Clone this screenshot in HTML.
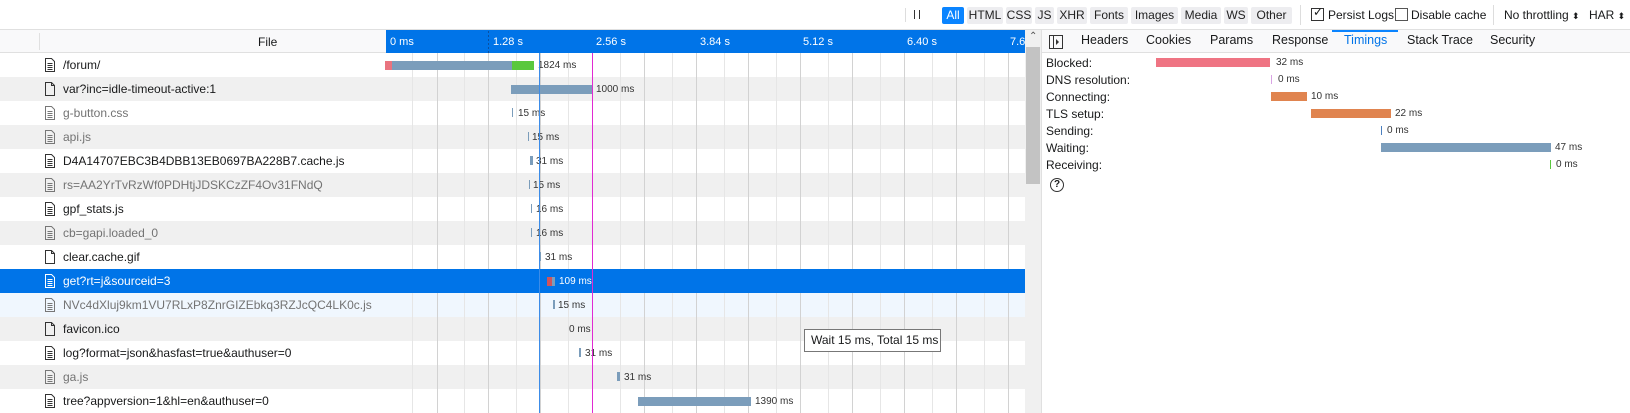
<!DOCTYPE html>
<html><head><meta charset="utf-8"><style>
*{margin:0;padding:0;box-sizing:border-box}
body{width:1630px;height:413px;overflow:hidden;background:#fff;font-family:"Liberation Sans",sans-serif;font-size:12px;color:#18191a;position:relative}
.a{position:absolute}
.tb{top:0;left:0;width:1630px;height:30px;border-bottom:1px solid #e0e0e0;background:#fff}
.btn{position:absolute;top:7px;height:17px;line-height:17px;background:#ededf0;border-radius:2px;font-size:12px;text-align:center;color:#222}
.row{position:absolute;left:0;width:1025px;height:24px}
.fn{position:absolute;left:63px;top:5px;font-size:12px;white-space:nowrap}
.bar{position:absolute;height:9px;background:#7b9dbb}
.lbl{position:absolute;font-size:10px;color:#333;white-space:nowrap}
.vl{position:absolute;top:53px;height:360px;width:1px}
.tab{position:absolute;top:33px;font-size:12.5px;color:#18191a}
.tl{position:absolute;left:1046px;font-size:12px}
</style></head><body>
<div class="a tb"></div>
<div class="a" style="left:905px;top:8px;width:1px;height:14px;background:#ddd"></div>
<div class="a" style="left:914px;top:10px;width:1px;height:9px;background:#333"></div>
<div class="a" style="left:919px;top:10px;width:1px;height:9px;background:#333"></div>
<div class="btn" style="left:942px;width:22px;background:#0a84ff;color:#fff">All</div>
<div class="btn" style="left:967px;width:36px">HTML</div>
<div class="btn" style="left:1006px;width:26px">CSS</div>
<div class="btn" style="left:1035px;width:19px">JS</div>
<div class="btn" style="left:1057px;width:30px">XHR</div>
<div class="btn" style="left:1090px;width:38px">Fonts</div>
<div class="btn" style="left:1131px;width:47px">Images</div>
<div class="btn" style="left:1181px;width:40px">Media</div>
<div class="btn" style="left:1224px;width:24px">WS</div>
<div class="btn" style="left:1251px;width:41px">Other</div>
<div class="a" style="left:1300px;top:5px;width:1px;height:20px;background:#ddd"></div>
<div class="a" style="left:1311px;top:8px;width:13px;height:13px;border:1px solid #333;background:#fff"></div>
<div class="a" style="left:1313px;top:5px;font-size:12px">✓</div>
<div class="a" style="left:1328px;top:8px">Persist Logs</div>
<div class="a" style="left:1395px;top:8px;width:13px;height:13px;border:1px solid #555;background:#fff"></div>
<div class="a" style="left:1411px;top:8px">Disable cache</div>
<div class="a" style="left:1493px;top:5px;width:1px;height:20px;background:#ddd"></div>
<div class="a" style="left:1504px;top:8px">No throttling <span style="font-size:9px">⬍</span></div>
<div class="a" style="left:1589px;top:8px">HAR <span style="font-size:9px">⬍</span></div>

<div class="a" style="left:0;top:30px;width:386px;height:23px;background:#f9f9fa;border-bottom:1px solid #e0e0e0"></div>
<div class="a" style="left:39px;top:33px;width:1px;height:17px;background:#e0e0e0"></div>
<div class="a" style="left:258px;top:35px">File</div>
<div class="a" style="left:386px;top:30px;width:639px;height:23px;background:#0074e8"></div>
<div class="a" style="left:390px;top:36px;color:#fff;font-size:11px;width:635px;height:14px;overflow:hidden">
<span class="a" style="left:0">0 ms</span><span class="a" style="left:103px">1.28 s</span><span class="a" style="left:206px">2.56 s</span><span class="a" style="left:310px">3.84 s</span><span class="a" style="left:413px">5.12 s</span><span class="a" style="left:517px">6.40 s</span><span class="a" style="left:620px">7.6</span></div>
<svg class="a" style="left:488px;top:31px" width="1" height="22"><line x1=".5" y1="0" x2=".5" y2="22" stroke="#0a4fa0" stroke-dasharray="2 2"/></svg>

<div class="row" style="top:53px;background:#fff"></div>
<div class="row" style="top:77px;background:#f0f0f0"></div>
<div class="row" style="top:101px;background:#fff"></div>
<div class="row" style="top:125px;background:#f0f0f0"></div>
<div class="row" style="top:149px;background:#fff"></div>
<div class="row" style="top:173px;background:#f0f0f0"></div>
<div class="row" style="top:197px;background:#fff"></div>
<div class="row" style="top:221px;background:#f0f0f0"></div>
<div class="row" style="top:245px;background:#fff"></div>
<div class="row" style="top:293px;background:#f0f7fe"></div>
<div class="row" style="top:317px;background:#f0f0f0"></div>
<div class="row" style="top:341px;background:#fff"></div>
<div class="row" style="top:365px;background:#f0f0f0"></div>
<div class="row" style="top:389px;background:#fff"></div>

<svg class="a" style="left:386px;top:53px" width="639" height="360">
<g stroke="#e6e6e6"><line x1="26.5" y1="0" x2="26.5" y2="360"/><line x1="78.5" y1="0" x2="78.5" y2="360"/><line x1="130.5" y1="0" x2="130.5" y2="360"/><line x1="182.5" y1="0" x2="182.5" y2="360"/><line x1="234.5" y1="0" x2="234.5" y2="360"/><line x1="286.5" y1="0" x2="286.5" y2="360"/><line x1="338.5" y1="0" x2="338.5" y2="360"/><line x1="390.5" y1="0" x2="390.5" y2="360"/><line x1="442.5" y1="0" x2="442.5" y2="360"/><line x1="494.5" y1="0" x2="494.5" y2="360"/><line x1="546.5" y1="0" x2="546.5" y2="360"/><line x1="598.5" y1="0" x2="598.5" y2="360"/></g>
<g stroke="#d2d2d2"><line x1="51.5" y1="0" x2="51.5" y2="360"/><line x1="102.5" y1="0" x2="102.5" y2="360"/><line x1="154.5" y1="0" x2="154.5" y2="360"/><line x1="206.5" y1="0" x2="206.5" y2="360"/><line x1="258.5" y1="0" x2="258.5" y2="360"/><line x1="310.5" y1="0" x2="310.5" y2="360"/><line x1="362.5" y1="0" x2="362.5" y2="360"/><line x1="414.5" y1="0" x2="414.5" y2="360"/><line x1="466.5" y1="0" x2="466.5" y2="360"/><line x1="518.5" y1="0" x2="518.5" y2="360"/><line x1="570.5" y1="0" x2="570.5" y2="360"/><line x1="622.5" y1="0" x2="622.5" y2="360"/></g>
</svg>
<div class="row" style="top:269px;background:#0074e8"></div>

<svg width="0" height="0" style="position:absolute"><defs>
<symbol id="d" viewBox="0 0 12 14"><path d="M1.5 .5h6l3 3v10h-9z" fill="none" stroke="currentColor"/><path d="M3.5 5.5h5M3.5 7.5h5M3.5 9.5h5M3.5 11.5h5" stroke="currentColor"/></symbol>
<symbol id="b" viewBox="0 0 12 14"><path d="M1.5 .5h6l3 3v10h-9z M7.5 .5v3h3" fill="none" stroke="currentColor"/></symbol>
</defs></svg>
<div style="color:#333">
<svg class="a" style="left:44px;top:58px" width="12" height="14"><use href="#d"/></svg>
<svg class="a" style="left:44px;top:82px" width="12" height="14"><use href="#b"/></svg>
<svg class="a" style="left:44px;top:106px;color:#777" width="12" height="14"><use href="#d"/></svg>
<svg class="a" style="left:44px;top:130px;color:#777" width="12" height="14"><use href="#d"/></svg>
<svg class="a" style="left:44px;top:154px" width="12" height="14"><use href="#d"/></svg>
<svg class="a" style="left:44px;top:178px;color:#777" width="12" height="14"><use href="#d"/></svg>
<svg class="a" style="left:44px;top:202px" width="12" height="14"><use href="#d"/></svg>
<svg class="a" style="left:44px;top:226px;color:#777" width="12" height="14"><use href="#d"/></svg>
<svg class="a" style="left:44px;top:250px" width="12" height="14"><use href="#b"/></svg>
<svg class="a" style="left:44px;top:274px;color:#fff" width="12" height="14"><use href="#d"/></svg>
<svg class="a" style="left:44px;top:298px;color:#777" width="12" height="14"><use href="#d"/></svg>
<svg class="a" style="left:44px;top:322px" width="12" height="14"><use href="#b"/></svg>
<svg class="a" style="left:44px;top:346px" width="12" height="14"><use href="#d"/></svg>
<svg class="a" style="left:44px;top:370px;color:#777" width="12" height="14"><use href="#d"/></svg>
<svg class="a" style="left:44px;top:394px" width="12" height="14"><use href="#d"/></svg>
</div>
<div class="fn" style="top:58px">/forum/</div>
<div class="fn" style="top:82px">var?inc=idle-timeout-active:1</div>
<div class="fn" style="top:106px;color:#737373">g-button.css</div>
<div class="fn" style="top:130px;color:#737373">api.js</div>
<div class="fn" style="top:154px">D4A14707EBC3B4DBB13EB0697BA228B7.cache.js</div>
<div class="fn" style="top:178px;color:#737373">rs=AA2YrTvRzWf0PDHtjJDSKCzZF4Ov31FNdQ</div>
<div class="fn" style="top:202px">gpf_stats.js</div>
<div class="fn" style="top:226px;color:#737373">cb=gapi.loaded_0</div>
<div class="fn" style="top:250px">clear.cache.gif</div>
<div class="fn" style="top:274px;color:#fff">get?rt=j&amp;sourceid=3</div>
<div class="fn" style="top:298px;color:#737373">NVc4dXluj9km1VU7RLxP8ZnrGIZEbkq3RZJcQC4LK0c.js</div>
<div class="fn" style="top:322px">favicon.ico</div>
<div class="fn" style="top:346px">log?format=json&amp;hasfast=true&amp;authuser=0</div>
<div class="fn" style="top:370px;color:#737373">ga.js</div>
<div class="fn" style="top:394px">tree?appversion=1&amp;hl=en&amp;authuser=0</div>

<div class="bar" style="left:385px;top:61px;width:7px;background:#e9747f"></div>
<div class="bar" style="left:392px;top:61px;width:120px"></div>
<div class="bar" style="left:512px;top:61px;width:22px;background:#5ac83e"></div>
<div class="lbl" style="left:538px;top:60px">1824 ms</div>
<div class="bar" style="left:511px;top:85px;width:82px"></div>
<div class="lbl" style="left:596px;top:84px">1000 ms</div>
<div class="bar" style="left:512px;top:108px;width:1px"></div><div class="lbl" style="left:518px;top:108px">15 ms</div>
<div class="bar" style="left:528px;top:132px;width:1px"></div><div class="lbl" style="left:532px;top:132px">15 ms</div>
<div class="bar" style="left:530px;top:156px;width:3px"></div><div class="lbl" style="left:536px;top:156px">31 ms</div>
<div class="bar" style="left:529px;top:180px;width:1px"></div><div class="lbl" style="left:533px;top:180px">15 ms</div>
<div class="bar" style="left:531px;top:204px;width:1px"></div><div class="lbl" style="left:536px;top:204px">16 ms</div>
<div class="bar" style="left:531px;top:228px;width:1px"></div><div class="lbl" style="left:536px;top:228px">16 ms</div>
<div class="bar" style="left:539px;top:252px;width:2px"></div><div class="lbl" style="left:545px;top:252px">31 ms</div>
<div class="bar" style="left:547px;top:277px;width:5px;background:#d0545c"></div><div class="bar" style="left:552px;top:277px;width:3px"></div>
<div class="lbl" style="left:559px;top:276px;color:#fff">109 ms</div>
<div class="bar" style="left:553px;top:300px;width:2px"></div><div class="lbl" style="left:558px;top:300px">15 ms</div>
<div class="lbl" style="left:569px;top:324px">0 ms</div>
<div class="bar" style="left:579px;top:348px;width:2px"></div><div class="lbl" style="left:585px;top:348px">31 ms</div>
<div class="bar" style="left:617px;top:372px;width:3px"></div><div class="lbl" style="left:624px;top:372px">31 ms</div>
<div class="bar" style="left:638px;top:397px;width:113px"></div><div class="lbl" style="left:755px;top:396px">1390 ms</div>

<div class="vl" style="left:539px;background:#3c8ce8"></div>
<div class="vl" style="left:592px;background:#e02ad2"></div>

<div class="a" style="left:804px;top:329px;width:137px;height:23px;border:1px solid #777;background:#fff;font-size:12px;line-height:21px;padding-left:6px">Wait 15 ms, Total 15 ms</div>

<div class="a" style="left:1025px;top:30px;width:16px;height:383px;background:#f0f0f0"></div>
<div class="a" style="left:1029px;top:31px;font-size:10px;color:#555">⌃</div>
<div class="a" style="left:1026px;top:47px;width:14px;height:137px;background:#c3c3c3"></div>
<div class="a" style="left:1041px;top:30px;width:1px;height:383px;background:#e0e0e0"></div>

<div class="a" style="left:1042px;top:30px;width:588px;height:23px;background:#f9f9fa;border-bottom:1px solid #e0e0e0"></div>
<svg class="a" style="left:1049px;top:35px" width="14" height="14"><rect x=".5" y=".5" width="13" height="13" fill="none" stroke="#333"/><line x1="4.5" y1="1" x2="4.5" y2="13" stroke="#333"/><path d="M7 4l3 3-3 3z" fill="#333"/></svg>
<div class="tab" style="left:1081px">Headers</div>
<div class="tab" style="left:1146px">Cookies</div>
<div class="tab" style="left:1210px">Params</div>
<div class="tab" style="left:1272px">Response</div>
<div class="a" style="left:1332px;top:30px;width:66px;height:2px;background:#0a84ff"></div>
<div class="tab" style="left:1344px;color:#0074e8">Timings</div>
<div class="tab" style="left:1407px">Stack Trace</div>
<div class="tab" style="left:1490px">Security</div>

<div class="tl" style="top:56px">Blocked:</div>
<div class="tl" style="top:73px">DNS resolution:</div>
<div class="tl" style="top:90px">Connecting:</div>
<div class="tl" style="top:107px">TLS setup:</div>
<div class="tl" style="top:124px">Sending:</div>
<div class="tl" style="top:141px">Waiting:</div>
<div class="tl" style="top:158px">Receiving:</div>
<div class="a" style="left:1156px;top:58px;width:114px;height:9px;background:#ef7483"></div><div class="lbl" style="left:1276px;top:57px">32 ms</div>
<div class="a" style="left:1271px;top:75px;width:1px;height:9px;background:#d9a3e4"></div><div class="lbl" style="left:1278px;top:74px">0 ms</div>
<div class="a" style="left:1271px;top:92px;width:36px;height:9px;background:#e0844f"></div><div class="lbl" style="left:1311px;top:91px">10 ms</div>
<div class="a" style="left:1311px;top:109px;width:80px;height:9px;background:#e0844f"></div><div class="lbl" style="left:1395px;top:108px">22 ms</div>
<div class="a" style="left:1381px;top:126px;width:1px;height:9px;background:#4a7fbf"></div><div class="lbl" style="left:1387px;top:125px">0 ms</div>
<div class="a" style="left:1381px;top:143px;width:170px;height:9px;background:#7b9dbb"></div><div class="lbl" style="left:1555px;top:142px">47 ms</div>
<div class="a" style="left:1550px;top:160px;width:1px;height:9px;background:#5ac83e"></div><div class="lbl" style="left:1556px;top:159px">0 ms</div>
<div class="a" style="left:1050px;top:178px;width:14px;height:14px;border:1px solid #333;border-radius:50%;font-size:10px;text-align:center;line-height:12px;font-weight:bold">?</div>
</body></html>
